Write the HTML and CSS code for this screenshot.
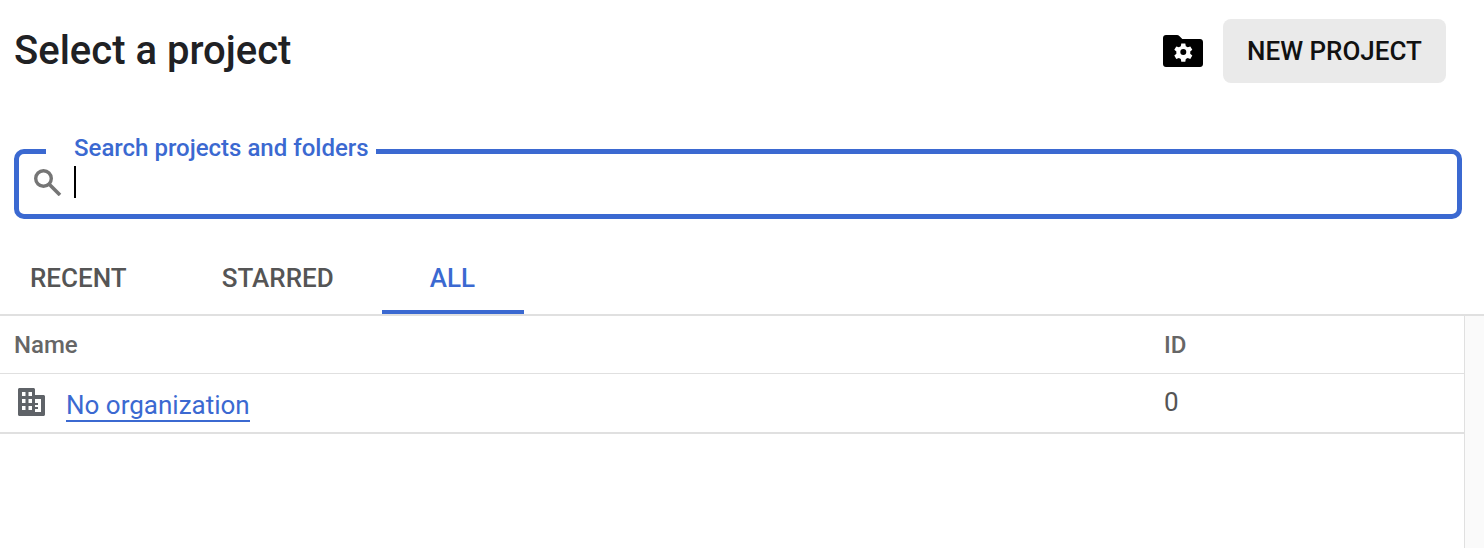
FILE: index.html
```html
<!DOCTYPE html>
<html lang="en">
<head>
    <meta charset="UTF-8">
    <title>Select a project</title>
    <link rel="stylesheet" href="styles.css">
</head>
<body>
    <div class="header">
        <h1 class="title">Select a project</h1>
        <svg class="folder-icon" viewBox="0 0 40 32">
            <path fill="#000" fill-rule="evenodd" d="M3 0h11c1 0 1.700.400 2.300 1l3 3H37c1.700 0 3 1.300 3 3v22c0 1.700-1.300 3-3 3H3c-1.700 0-3-1.300-3-3V3c0-1.700 1.300-3 3-3zM18.300 8.500l-.500 2.700c-.700.300-1.300.600-1.900 1.100l-2.600-.900-2 3.400 2.100 1.800c-.100.700-.100 1.400 0 2.100l-2.100 1.800 2 3.400 2.600-.900c.600.500 1.200.800 1.900 1.100l.500 2.700h4l.500-2.700c.700-.300 1.300-.600 1.900-1.100l2.600.900 2-3.400-2.100-1.800c.100-.700.100-1.400 0-2.100l2.100-1.800-2-3.400-2.600.900c-.600-.500-1.200-.800-1.900-1.100l-.500-2.700h-4zm2 5.500a3 3 0 1 1 0 6 3 3 0 0 1 0-6z"/>
        </svg>
        <button class="new-project">NEW PROJECT</button>
    </div>

    <div class="search-box">
        <span class="search-label">Search projects and folders</span>
        <svg class="search-icon" viewBox="0 0 28 28">
            <circle cx="9.500" cy="10.500" r="7.800" fill="none" stroke="#757575" stroke-width="3.400"/>
            <path d="M15 16l11 11" fill="none" stroke="#757575" stroke-width="3.600"/>
        </svg>
        <span class="caret"></span>
    </div>

    <div class="tabs">
        <div class="tab tab-first">RECENT</div>
        <div class="tab">STARRED</div>
        <div class="tab tab-active">ALL</div>
    </div>

    <div class="content">
        <div class="table">
            <div class="row row-head">
                <div class="col-name">Name</div>
                <div class="col-id">ID</div>
            </div>
            <div class="row row-body">
                <div class="col-name">
                    <svg class="org-icon" viewBox="0 0 28 28">
                        <path fill="#5f6368" fill-rule="evenodd" d="M1 1.500C1 .700 1.700 0 2.500 0h14c.800 0 1.500.700 1.500 1.500V7h8.500c.800 0 1.500.700 1.500 1.500v18c0 .800-.700 1.500-1.500 1.500h-24C1.700 28 1 27.300 1 26.500zM5 4v4h3.500V4zm6.500 0v4H15V4zM5 11v4h3.500v-4zm6.500 0v4H15v-4zM18 11v4h3v2h-3v2h3v2h-3v3h6V11zM5 18v4h3.500v-4zm6.500 0v4H15v-4z"/>
                    </svg>
                    <a class="org-link" href="#">No organization</a>
                </div>
                <div class="col-id">0</div>
            </div>
        </div>
        <div class="scroll-track"></div>
    </div>
</body>
</html>
```

FILE: styles.css
```css
body {
    margin: 0;
    height: 548px;
    overflow: hidden;
    display: flex;
    flex-direction: column;
    font-family: Roboto, "Liberation Sans", sans-serif;
    background-color: #FFFFFF;
}

.header {
    display: flex;
    align-items: center;
    height: 64px;
    margin-top: 19px;
    padding: 0 38px 0 14px;
}

.title {
    flex: 1;
    margin: 0;
    margin-top: -1px;
    font-size: 40px;
    font-weight: 500;
    color: #202124;
}

.folder-icon {
    width: 40px;
    height: 32px;
    margin-right: 20px;
}

.new-project {
    width: 223px;
    height: 64px;
    border: none;
    border-radius: 8px;
    background-color: #EAEAEA;
    color: #111111;
    font-family: inherit;
    font-size: 26px;
    font-weight: 500;
}

.search-box {
    position: relative;
    display: flex;
    align-items: center;
    height: 70px;
    box-sizing: border-box;
    margin: 66px 22px 0 14px;
    padding-left: 15px;
    border: 5px solid #3B69D1;
    border-radius: 10px;
}

.search-label {
    position: absolute;
    top: -21px;
    left: 27px;
    padding: 0 7px 0 28px;
    background-color: #FFFFFF;
    color: #3B69D1;
    font-size: 24px;
    font-weight: 500;
    line-height: 30px;
}

.search-icon {
    width: 28px;
    height: 28px;
    margin-top: -4px;
}

.caret {
    width: 2px;
    height: 32px;
    margin-left: 12px;
    margin-top: -4px;
    background-color: #000000;
}

.tabs {
    display: flex;
    height: 97px;
    box-sizing: border-box;
    border-bottom: 2px solid #E0E0E0;
}

.tab {
    height: 95px;
    box-sizing: border-box;
    padding: 44px 48px 0;
    color: #555555;
    font-size: 26px;
    font-weight: 500;
}

.tab-first {
    padding-left: 30px;
    padding-right: 47px;
}

.tab-active {
    padding-right: 49px;
    color: #3B69D1;
    border-bottom: 4px solid #3B69D1;
}

.content {
    flex: 1;
    display: flex;
}

.table {
    flex: 1;
    border-right: 1px solid #E0E0E0;
}

.row {
    display: flex;
    align-items: center;
    padding-left: 14px;
    box-sizing: border-box;
}

.row-head {
    height: 58px;
    border-bottom: 1px solid #E0E0E0;
    color: #666666;
    font-size: 24px;
    font-weight: 500;
}

.row-body {
    height: 60px;
    border-bottom: 2px solid #E0E0E0;
    color: #555555;
    font-size: 26px;
}

.col-name {
    display: flex;
    align-items: center;
    width: 1150px;
}

.org-icon {
    width: 28px;
    height: 28px;
    margin-left: 3px;
    margin-right: 21px;
    margin-top: -2px;
}

.org-link {
    margin-top: 5px;
    color: #3B69D1;
    text-decoration: none;
    border-bottom: 2px solid #3B69D1;
}

.row-body .col-id {
    margin-top: -2px;
}

.scroll-track {
    width: 19px;
    background-color: #FAFAFA;
}
```
